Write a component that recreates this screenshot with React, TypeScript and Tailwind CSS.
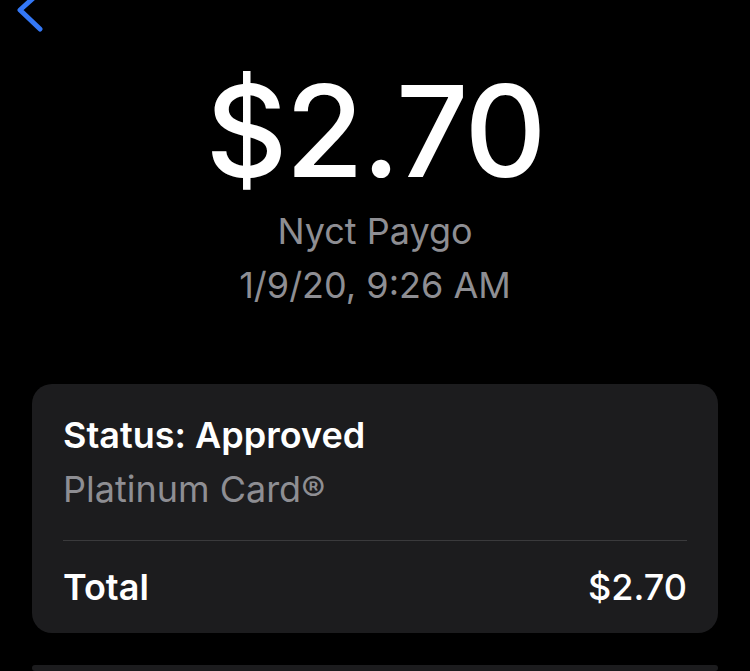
export default function App() {
  return (
    <div
      className="w-[750px] h-[671px] bg-black overflow-hidden flex flex-col"
      style={{ fontFamily: "Inter, 'Noto Sans', sans-serif" }}
    >
      <div className="h-0 relative">
        <svg
          className="absolute left-[14px] top-[-12px]"
          width="34"
          height="48"
          viewBox="0 0 34 48"
          fill="none"
        >
          <path
            d="M26 4 L6 22 L26 41"
            stroke="#3478f6"
            strokeWidth="5"
            strokeLinecap="round"
            strokeLinejoin="round"
          />
        </svg>
      </div>

      <div className="flex flex-col items-center pt-[56px]">
        <div className="text-white text-[127px] leading-[150px] font-medium tracking-[-2px]">
          $2.70
        </div>
        <div className="text-[#8e8e93] text-[36px] leading-[54px] mt-[-2px]">
          Nyct Paygo
        </div>
        <div className="text-[#8e8e93] text-[36px] leading-[54px]">
          1/9/20, 9:26 AM
        </div>
      </div>

      <div className="mx-[32px] mt-[72px] bg-[#1c1c1e] rounded-[20px] px-[31px]">
        <div className="pt-[24px] pb-[24px]">
          <div className="text-white text-[36px] leading-[54px] font-semibold">
            Status: Approved
          </div>
          <div className="text-[#8e8e93] text-[36px] leading-[54px]">
            Platinum Card®
          </div>
        </div>
        <div className="h-px bg-[#3a3a3c]" />
        <div className="flex justify-between items-center h-[92px] text-white text-[36px]">
          <span className="font-semibold">Total</span>
          <span className="font-medium">$2.70</span>
        </div>
      </div>

      <div className="mx-[32px] mt-[32px] bg-[#1c1c1e] rounded-[20px] h-[200px]" />
    </div>
  );
}
